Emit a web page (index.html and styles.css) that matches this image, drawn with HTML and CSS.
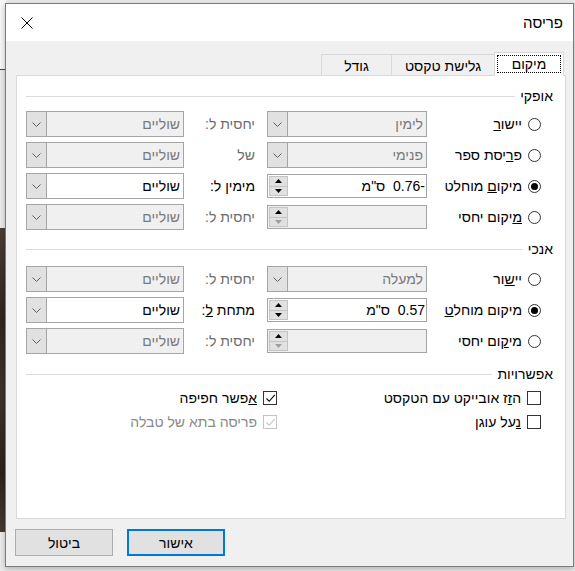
FILE: index.html
```html
<!DOCTYPE html>
<html lang="he">
<head>
<meta charset="utf-8">
<title>פריסה</title>
<link rel="stylesheet" href="styles.css">
</head>
<body>
<div class="desktop">
  <div class="bg-top"></div>
  <div class="bg-line"></div>
  <div class="bg-wood"></div>
  <div class="dialog" dir="rtl">
    <div class="titlebar">
      <span class="title">פריסה</span>
      <span class="close"><svg width="12" height="12" viewBox="0 0 12 12"><path d="M0.5 0.5 L11.5 11.5 M11.5 0.5 L0.5 11.5" stroke="#000" stroke-width="1" fill="none"/></svg></span>
    </div>
    <div class="content">
      <div class="tabs">
        <div class="tab active"><span class="focus">מיקום</span></div>
        <div class="tab tab-wide">גלישת טקסט</div>
        <div class="tab">גודל</div>
      </div>
      <div class="panel">
        <div class="group-head"><span>אופקי</span><span class="rule"></span></div>
        <div class="grid grid-h">
          <div class="opt"><span class="radio"></span><span>יישו<u>ר</u></span></div>
          <div class="combo disabled"><span class="val">לימין</span><span class="drop"><svg width="9" height="5" viewBox="0 0 9 5"><path d="M0.5 0.5 L4.5 4.5 L8.5 0.5" fill="none" stroke="#606060"/></svg></span></div>
          <div class="lbl dim">יחסית ל:</div>
          <div class="combo disabled"><span class="val">שוליים</span><span class="drop"><svg width="9" height="5" viewBox="0 0 9 5"><path d="M0.5 0.5 L4.5 4.5 L8.5 0.5" fill="none" stroke="#606060"/></svg></span></div>

          <div class="opt"><span class="radio"></span><span>פ<u>ר</u>יסת ספר</span></div>
          <div class="combo disabled"><span class="val">פנימי</span><span class="drop"><svg width="9" height="5" viewBox="0 0 9 5"><path d="M0.5 0.5 L4.5 4.5 L8.5 0.5" fill="none" stroke="#606060"/></svg></span></div>
          <div class="lbl dim">של</div>
          <div class="combo disabled"><span class="val">שוליים</span><span class="drop"><svg width="9" height="5" viewBox="0 0 9 5"><path d="M0.5 0.5 L4.5 4.5 L8.5 0.5" fill="none" stroke="#606060"/></svg></span></div>

          <div class="opt"><span class="radio checked"></span><span>מיקו<u>ם</u> מוחלט</span></div>
          <div class="spin"><span class="val">-0.76  ס"מ</span><span class="arrows"><span class="arr"><svg width="7" height="4" viewBox="0 0 7 4"><path d="M0 4 L3.5 0 L7 4Z" fill="#000"/></svg></span><span class="arr"><svg width="7" height="4" viewBox="0 0 7 4"><path d="M0 0 L3.5 4 L7 0Z" fill="#000"/></svg></span></span></div>
          <div class="lbl">מימי<u>ן</u> ל:</div>
          <div class="combo"><span class="val">שוליים</span><span class="drop"><svg width="9" height="5" viewBox="0 0 9 5"><path d="M0.5 0.5 L4.5 4.5 L8.5 0.5" fill="none" stroke="#606060"/></svg></span></div>

          <div class="opt"><span class="radio"></span><span><u>מ</u>יקום יחסי</span></div>
          <div class="spin disabled"><span class="val"></span><span class="arrows"><span class="arr"><svg width="7" height="4" viewBox="0 0 7 4"><path d="M0 4 L3.5 0 L7 4Z" fill="#000"/></svg></span><span class="arr"><svg width="7" height="4" viewBox="0 0 7 4"><path d="M0 0 L3.5 4 L7 0Z" fill="#a0a0a0"/></svg></span></span></div>
          <div class="lbl dim">יחסית ל:</div>
          <div class="combo disabled"><span class="val">שוליים</span><span class="drop"><svg width="9" height="5" viewBox="0 0 9 5"><path d="M0.5 0.5 L4.5 4.5 L8.5 0.5" fill="none" stroke="#606060"/></svg></span></div>
        </div>

        <div class="group-head gh-v"><span>אנכי</span><span class="rule"></span></div>
        <div class="grid grid-v">
          <div class="opt"><span class="radio"></span><span>יי<u>ש</u>ור</span></div>
          <div class="combo disabled"><span class="val">למעלה</span><span class="drop"><svg width="9" height="5" viewBox="0 0 9 5"><path d="M0.5 0.5 L4.5 4.5 L8.5 0.5" fill="none" stroke="#606060"/></svg></span></div>
          <div class="lbl dim">יחסית ל:</div>
          <div class="combo disabled"><span class="val">שוליים</span><span class="drop"><svg width="9" height="5" viewBox="0 0 9 5"><path d="M0.5 0.5 L4.5 4.5 L8.5 0.5" fill="none" stroke="#606060"/></svg></span></div>

          <div class="opt"><span class="radio checked"></span><span>מיקום מוחל<u>ט</u></span></div>
          <div class="spin"><span class="val">0.57  ס"מ</span><span class="arrows"><span class="arr"><svg width="7" height="4" viewBox="0 0 7 4"><path d="M0 4 L3.5 0 L7 4Z" fill="#000"/></svg></span><span class="arr"><svg width="7" height="4" viewBox="0 0 7 4"><path d="M0 0 L3.5 4 L7 0Z" fill="#000"/></svg></span></span></div>
          <div class="lbl">מתחת <u>ל</u>:</div>
          <div class="combo"><span class="val">שוליים</span><span class="drop"><svg width="9" height="5" viewBox="0 0 9 5"><path d="M0.5 0.5 L4.5 4.5 L8.5 0.5" fill="none" stroke="#606060"/></svg></span></div>

          <div class="opt"><span class="radio"></span><span>מי<u>ק</u>ום יחסי</span></div>
          <div class="spin disabled"><span class="val"></span><span class="arrows"><span class="arr"><svg width="7" height="4" viewBox="0 0 7 4"><path d="M0 4 L3.5 0 L7 4Z" fill="#000"/></svg></span><span class="arr"><svg width="7" height="4" viewBox="0 0 7 4"><path d="M0 0 L3.5 4 L7 0Z" fill="#a0a0a0"/></svg></span></span></div>
          <div class="lbl dim">יחסית ל:</div>
          <div class="combo disabled"><span class="val">שוליים</span><span class="drop"><svg width="9" height="5" viewBox="0 0 9 5"><path d="M0.5 0.5 L4.5 4.5 L8.5 0.5" fill="none" stroke="#606060"/></svg></span></div>
        </div>

        <div class="group-head gh-o"><span>אפשרויות</span><span class="rule"></span></div>
        <div class="opts">
          <div class="opt"><span class="check"></span><span>ה<u>ז</u>ז אובייקט עם הטקסט</span></div>
          <div class="opt"><span class="check"><svg width="11" height="11" viewBox="0 0 11 11"><path d="M1.5 5.5 L4.2 8.3 L9.8 1.8" fill="none" stroke="#000" stroke-width="1.1"/></svg></span><span><u>א</u>פשר חפיפה</span></div>
          <div class="opt"><span class="check"></span><span><u>נ</u>על עוגן</span></div>
          <div class="opt dimopt"><span class="check dis"><svg width="11" height="11" viewBox="0 0 11 11"><path d="M1.5 5.5 L4.2 8.3 L9.8 1.8" fill="none" stroke="#c4c4c4" stroke-width="1.1"/></svg></span><span>פריסה בתא של טבלה</span></div>
        </div>
      </div>
      <div class="buttons">
        <button class="btn default">אישור</button>
        <button class="btn">ביטול</button>
      </div>
    </div>
  </div>
</div>
</body>
</html>
```
FILE: styles.css
```css
* { box-sizing: border-box; }
html, body { margin: 0; padding: 0; }
body {
  width: 575px;
  height: 571px;
  overflow: hidden;
  font-family: "Liberation Sans", "DejaVu Sans", sans-serif;
  font-size: 14px;
  color: #000;
  background: #ececec;
}
.desktop {
  position: relative;
  width: 575px;
  height: 571px;
  background: #ebebeb;
}
.bg-top {
  position: absolute;
  left: 0; top: 0;
  width: 6px; height: 69px;
  background: #f7f7f7;
}
.bg-line {
  position: absolute;
  left: 0; top: 69px;
  width: 6px; height: 1px;
  background: #4a4a4a;
}
.bg-wood {
  position: absolute;
  left: 0; top: 228px;
  width: 6px; height: 304px;
  background: linear-gradient(180deg, #4a3e33 0%, #2e2620 30%, #3d342a 55%, #2a231d 80%, #463b30 100%);
}
.dialog {
  position: absolute;
  left: 5px; top: 3px;
  width: 569px; height: 564px;
  border: 1px solid #7a7a7a;
  background: #f0f0f0;
  box-shadow: 0 2px 6px rgba(0,0,0,0.25);
  display: flex;
  flex-direction: column;
}
.titlebar {
  height: 37px;
  background: #fff;
  display: flex;
  align-items: center;
  justify-content: space-between;
  padding: 0 10px 0 15px;
}
.title { font-size: 15px; }
.close { display: flex; width: 12px; height: 12px; }
.content {
  flex: 1;
  display: flex;
  flex-direction: column;
  padding: 11px 7px 9px 10px;
}
.tabs {
  display: flex;
  align-items: flex-end;
  height: 23px;
  margin-right: 2px;
  position: relative;
  z-index: 1;
}
.tab {
  height: 21px;
  width: 70px;
  display: flex;
  align-items: center;
  justify-content: center;
  background: #f0f0f0;
  border-top: 1px solid #d9d9d9;
  border-left: 1px solid #d9d9d9;
  padding-top: 1px;
}
.tab-wide { width: 103px; }
.tab.active {
  height: 24px;
  margin-bottom: -1px;
  background: #fff;
  border: 1px solid #d9d9d9;
  border-bottom: none;
  padding: 2px 2px 3px 2px;
}
.focus {
  flex: 1;
  align-self: stretch;
  display: flex;
  align-items: center;
  justify-content: center;
  border: 1px dotted #000;
}
.panel {
  height: 444px;
  background: #fff;
  border: 1px solid #d9d9d9;
  padding: 12px 12px 0 9px;
}
.group-head {
  display: flex;
  align-items: center;
  height: 16px;
}
.rule {
  flex: 1;
  height: 1px;
  background: #dcdcdc;
  margin-right: 5px;
}
.gh-v { margin-top: 11px; }
.gh-o { margin-top: 12px; }
.grid {
  display: grid;
  grid-template-columns: 114px 160px 83px 158px;
  grid-auto-rows: 26px;
  row-gap: 5px;
  align-items: center;
  padding-right: 12px;
}
.grid-h { margin-top: 7px; }
.grid-v { margin-top: 9px; }
.opt {
  display: flex;
  align-items: center;
  gap: 6px;
  white-space: nowrap;
}
.radio {
  width: 13px; height: 13px;
  border: 1px solid #333;
  border-radius: 50%;
  background: #fff;
  display: flex;
  align-items: center;
  justify-content: center;
  flex: none;
}
.radio.checked::after {
  content: "";
  width: 7px; height: 7px;
  border-radius: 50%;
  background: #000;
}
.lbl {
  padding-right: 12px;
  white-space: nowrap;
}
.dim { color: #6d6d6d; }
.combo {
  height: 26px;
  display: flex;
  border: 1px solid #a5a5a5;
  background: #fff;
}
.combo.disabled { background: #f0f0f0; color: #7a7a7a; }
.val {
  flex: 1;
  display: flex;
  align-items: center;
  padding-right: 3px;
  white-space: pre;
}
.drop {
  width: 20px;
  background: #e1e1e1;
  border-right: 1px solid #a5a5a5;
  display: flex;
  align-items: center;
  justify-content: center;
}
.spin {
  height: 24px;
  display: flex;
  border: 1px solid #a5a5a5;
  background: #fff;
}
.spin .val { padding-right: 1px; }
.spin.disabled { background: #f0f0f0; }
.arrows {
  width: 21px;
  padding: 1px;
  display: flex;
  flex-direction: column;
}
.arr {
  flex: 1;
  display: flex;
  align-items: center;
  justify-content: center;
  background: #e1e1e1;
  border: 1px solid #c4c4c4;
}
.arr + .arr { border-top: none; }
.opts {
  display: grid;
  grid-template-columns: 264px 1fr;
  grid-auto-rows: 24px;
  align-items: center;
  margin-top: 4px;
  padding-right: 12px;
}
.check {
  width: 14px; height: 14px;
  border: 1px solid #333;
  background: #fff;
  display: flex;
  align-items: center;
  justify-content: center;
  flex: none;
}
.check.dis { border-color: #c4c4c4; }
.dimopt { color: #8a8a8a; }
.buttons {
  display: flex;
  gap: 14px;
  margin-top: 10px;
  margin-left: -1px;
  direction: ltr;
  flex-direction: row-reverse;
  justify-content: flex-end;
}
.btn {
  width: 98px;
  height: 27px;
  background: #e1e1e1;
  border: 1px solid #adadad;
  font-family: inherit;
  font-size: 14px;
  color: #000;
  padding: 0;
}
.btn.default { border: 2px solid #0078d7; }
```
